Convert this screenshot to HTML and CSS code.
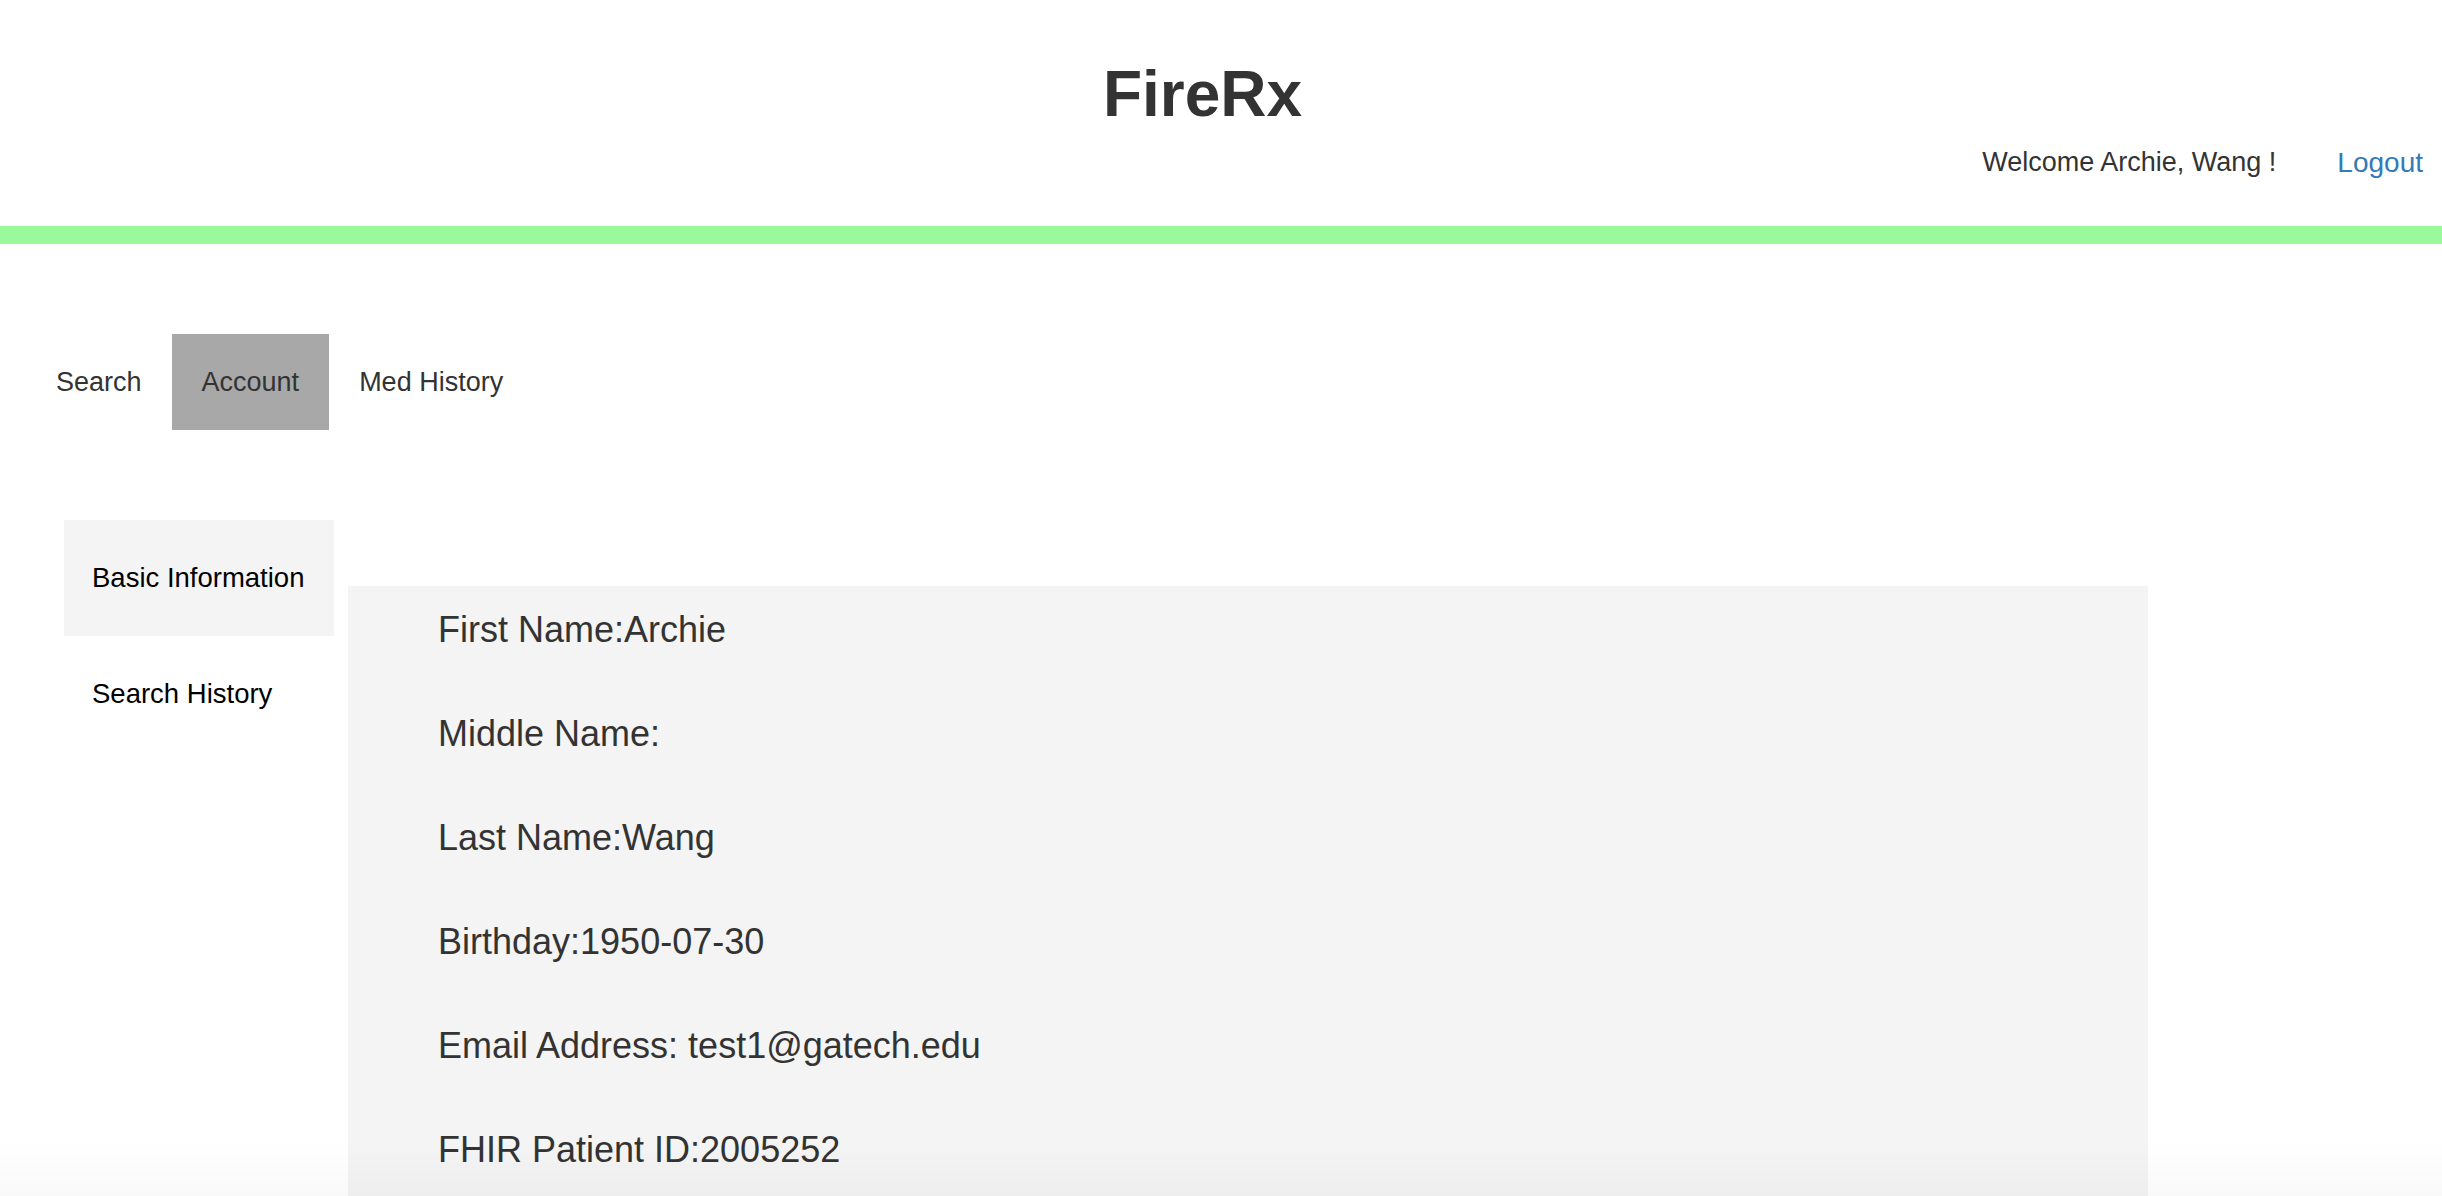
FILE: index.html
```html
<!DOCTYPE html>
<html lang="en">
<head>
<meta charset="utf-8">
<title>FireRx</title>
<link rel="stylesheet" href="styles.css">
</head>
<body>
<header class="site-header">
  <h1 class="brand">FireRx</h1>
  <div class="user-bar">
    <span class="welcome">Welcome Archie, Wang !</span>
    <a class="logout" href="#">Logout</a>
  </div>
</header>
<div class="green-rule"></div>

<nav class="tabs">
  <a class="tab" href="#">Search</a>
  <a class="tab tab-active" href="#">Account</a>
  <a class="tab" href="#">Med History</a>
</nav>

<main class="account">
  <ul class="side-menu">
    <li class="side-item side-item-active">Basic Information</li>
    <li class="side-item">Search History</li>
  </ul>
  <section class="info-panel">
    <p class="info-row">First Name:Archie</p>
    <p class="info-row">Middle Name:</p>
    <p class="info-row">Last Name:Wang</p>
    <p class="info-row">Birthday:1950-07-30</p>
    <p class="info-row">Email Address: test1@gatech.edu</p>
    <p class="info-row">FHIR Patient ID:2005252</p>
  </section>
</main>
<div class="bottom-fade"></div>
</body>
</html>
```

FILE: styles.css
```css
html, body {
  margin: 0;
  padding: 0;
  background: #ffffff;
}

body {
  font-family: "Liberation Sans", Arial, Helvetica, sans-serif;
  color: #333333;
}

.site-header {
  padding-bottom: 48px;
}

.brand {
  margin: 0;
  padding-top: 59px;
  padding-right: 37px;
  font-size: 64px;
  line-height: 70px;
  font-weight: bold;
  text-align: center;
  color: #333333;
}

.user-bar {
  display: flex;
  justify-content: flex-end;
  align-items: center;
  gap: 61px;
  height: 31px;
  margin-top: 18px;
  padding-right: 19px;
  font-size: 27px;
  line-height: 31px;
}

.welcome {
  color: #333333;
}

.logout {
  color: #337ab7;
  font-size: 28px;
  text-decoration: none;
}

.green-rule {
  height: 18px;
  background: #99f99b;
}

.tabs {
  display: flex;
  margin-top: 90px;
  padding-left: 26px;
}

.tab {
  display: flex;
  align-items: center;
  height: 96px;
  padding: 0 30px;
  font-size: 27px;
  color: #333333;
  text-decoration: none;
}

.tab-active {
  background: #a8a8a8;
}

.account {
  display: flex;
  align-items: flex-start;
  gap: 14px;
  margin-top: 90px;
  padding-left: 64px;
}

.side-menu {
  list-style: none;
  margin: 0;
  padding: 0;
  width: 270px;
  flex: none;
}

.side-item {
  display: flex;
  align-items: center;
  height: 116px;
  padding-left: 28px;
  font-size: 27.5px;
  color: #000000;
}

.side-item-active {
  background: #f4f4f4;
}

.info-panel {
  width: 1800px;
  flex: none;
  margin-top: 66px;
  padding: 23px 0 60px 90px;
  box-sizing: border-box;
  background: #f4f4f4;
}

.info-row {
  margin: 0 0 63px 0;
  font-size: 36px;
  line-height: 41px;
  color: #333333;
}

.info-row:last-child {
  margin-bottom: 0;
}

.bottom-fade {
  position: fixed;
  left: 0;
  right: 0;
  bottom: 0;
  height: 56px;
  pointer-events: none;
  background: linear-gradient(to bottom, rgba(0, 0, 0, 0), rgba(0, 0, 0, 0.025));
}
```
